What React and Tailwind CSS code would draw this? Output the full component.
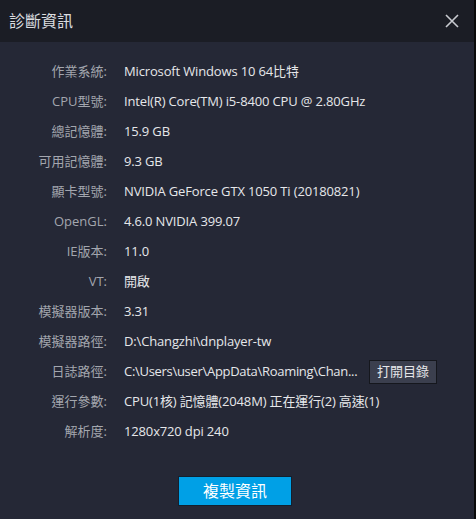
import React from 'react'

const rows = [
  ['作業系統:', 'Microsoft Windows 10 64比特'],
  ['CPU型號:', 'Intel(R) Core(TM) i5-8400 CPU @ 2.80GHz'],
  ['總記憶體:', '15.9 GB'],
  ['可用記憶體:', '9.3 GB'],
  ['顯卡型號:', 'NVIDIA GeForce GTX 1050 Ti (20180821)'],
  ['OpenGL:', '4.6.0 NVIDIA 399.07'],
  ['IE版本:', '11.0'],
  ['VT:', '開啟'],
  ['模擬器版本:', '3.31'],
  ['模擬器路徑:', 'D:\\Changzhi\\dnplayer-tw'],
  ['日誌路徑:', 'C:\\Users\\user\\AppData\\Roaming\\Chan...', true],
  ['運行參數:', 'CPU(1核) 記憶體(2048M) 正在運行(2) 高速(1)'],
  ['解析度:', '1280x720 dpi 240'],
]

const App = () => {
  return (
    <div
      className="flex h-[519px] w-[476px] bg-black"
      style={{ fontFamily: '"Open Sans", "Noto Sans CJK TC", sans-serif' }}
    >
      <div className="flex w-[474px] flex-col bg-[#252836]">
        {/* header */}
        <div className="flex h-[42px] shrink-0 items-center justify-between bg-[#1b1d25] pl-[9px] pr-[15px]">
          <h1 className="text-[16px] text-[#dcdde0]">診斷資訊</h1>
          <svg width="14" height="14" viewBox="0 0 14 14" className="text-[#c8cad0]">
            <path d="M1 1 L13 13 M13 1 L1 13" stroke="currentColor" strokeWidth="1.6" />
          </svg>
        </div>

        <div className="flex flex-col pt-[15px]">
          {rows.map(([label, value, withButton]) => (
            <div key={label} className="flex h-[30px] items-center text-[13px]">
              <span className="w-[107px] shrink-0 text-right text-[#a3a6ae]">{label}</span>
              <span
                className={
                  withButton
                    ? 'ml-[17px] w-[235px] shrink-0 whitespace-nowrap tracking-[-0.3px] text-[#e6e7ea]'
                    : 'ml-[17px] whitespace-nowrap tracking-[-0.15px] text-[#e6e7ea]'
                }
              >
                {value}
              </span>
              {withButton && (
                <button className="ml-[10px] h-[24px] w-[68px] border border-[#15171d] bg-[#3b3f4e] text-[13px] text-[#e6e7ea]">
                  打開目錄
                </button>
              )}
            </div>
          ))}
        </div>

        <div className="flex justify-center pt-[29px]">
          <button className="ml-[-4px] h-[30px] w-[114px] border border-[#13202e] bg-[#00a0e6] text-[16px] text-white">
            複製資訊
          </button>
        </div>
      </div>
      <div className="w-[2px] bg-[#0a0a0a]" />
    </div>
  )
}

export default App
